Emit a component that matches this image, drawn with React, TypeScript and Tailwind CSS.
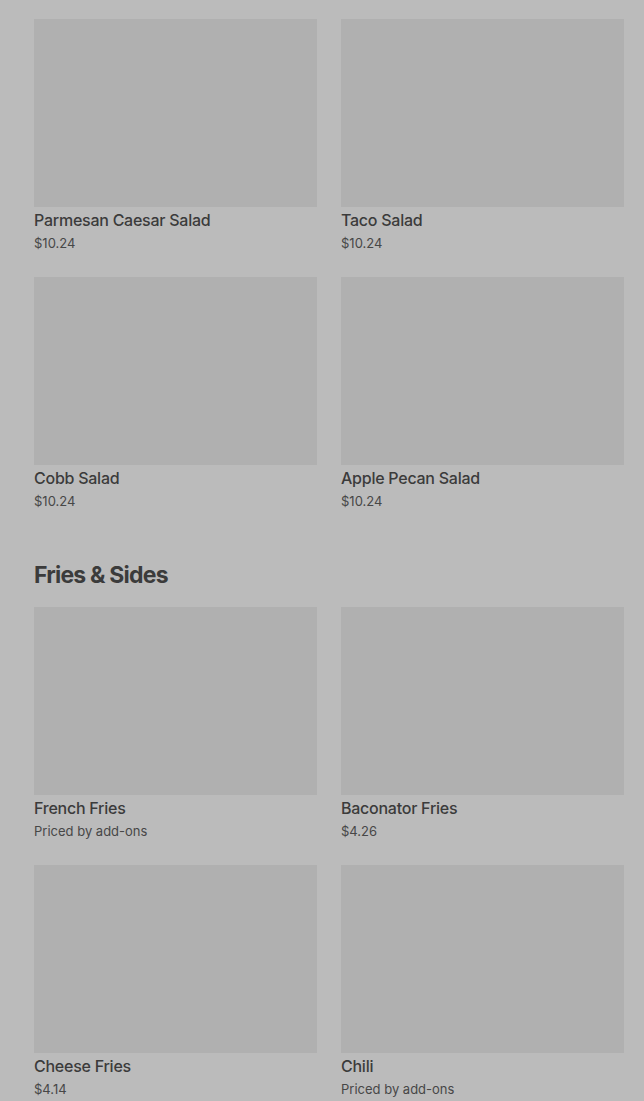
import React from 'react';

type Item = { name: string; price: string };

const salads: Item[] = [
  { name: 'Parmesan Caesar Salad', price: '$10.24' },
  { name: 'Taco Salad', price: '$10.24' },
  { name: 'Cobb Salad', price: '$10.24' },
  { name: 'Apple Pecan Salad', price: '$10.24' },
];

const sides: Item[] = [
  { name: 'French Fries', price: 'Priced by add-ons' },
  { name: 'Baconator Fries', price: '$4.26' },
  { name: 'Cheese Fries', price: '$4.14' },
  { name: 'Chili', price: 'Priced by add-ons' },
];

const ItemCard = ({ item }: { item: Item }) => (
  <div className="flex flex-col">
    <div className="h-[188px] w-full bg-[#b0b0b0]" />
    <div className="mt-px text-[16px] leading-6 font-medium tracking-[-0.25px] text-[#3b3b3b]">
      {item.name}
    </div>
    <div className="mt-px text-[13px] leading-5 text-[#474747]">{item.price}</div>
  </div>
);

const Grid = ({ items }: { items: Item[] }) => (
  <div className="grid grid-cols-2 gap-x-6 gap-y-6">
    {items.map(item => (
      <ItemCard key={item.name} item={item} />
    ))}
  </div>
);

export default function App() {
  return (
    <div
      className="min-h-[1101px] bg-[#bbbbbb] pl-[34px] pr-5 pt-[19px]"
      style={{ fontFamily: 'Inter, "Liberation Sans", sans-serif' }}
    >
      <Grid items={salads} />
      <h2 className="mt-12 mb-4 text-[23px] leading-8 font-bold tracking-[-0.8px] text-[#3b3b3b]">
        Fries &amp; Sides
      </h2>
      <Grid items={sides} />
    </div>
  );
}
